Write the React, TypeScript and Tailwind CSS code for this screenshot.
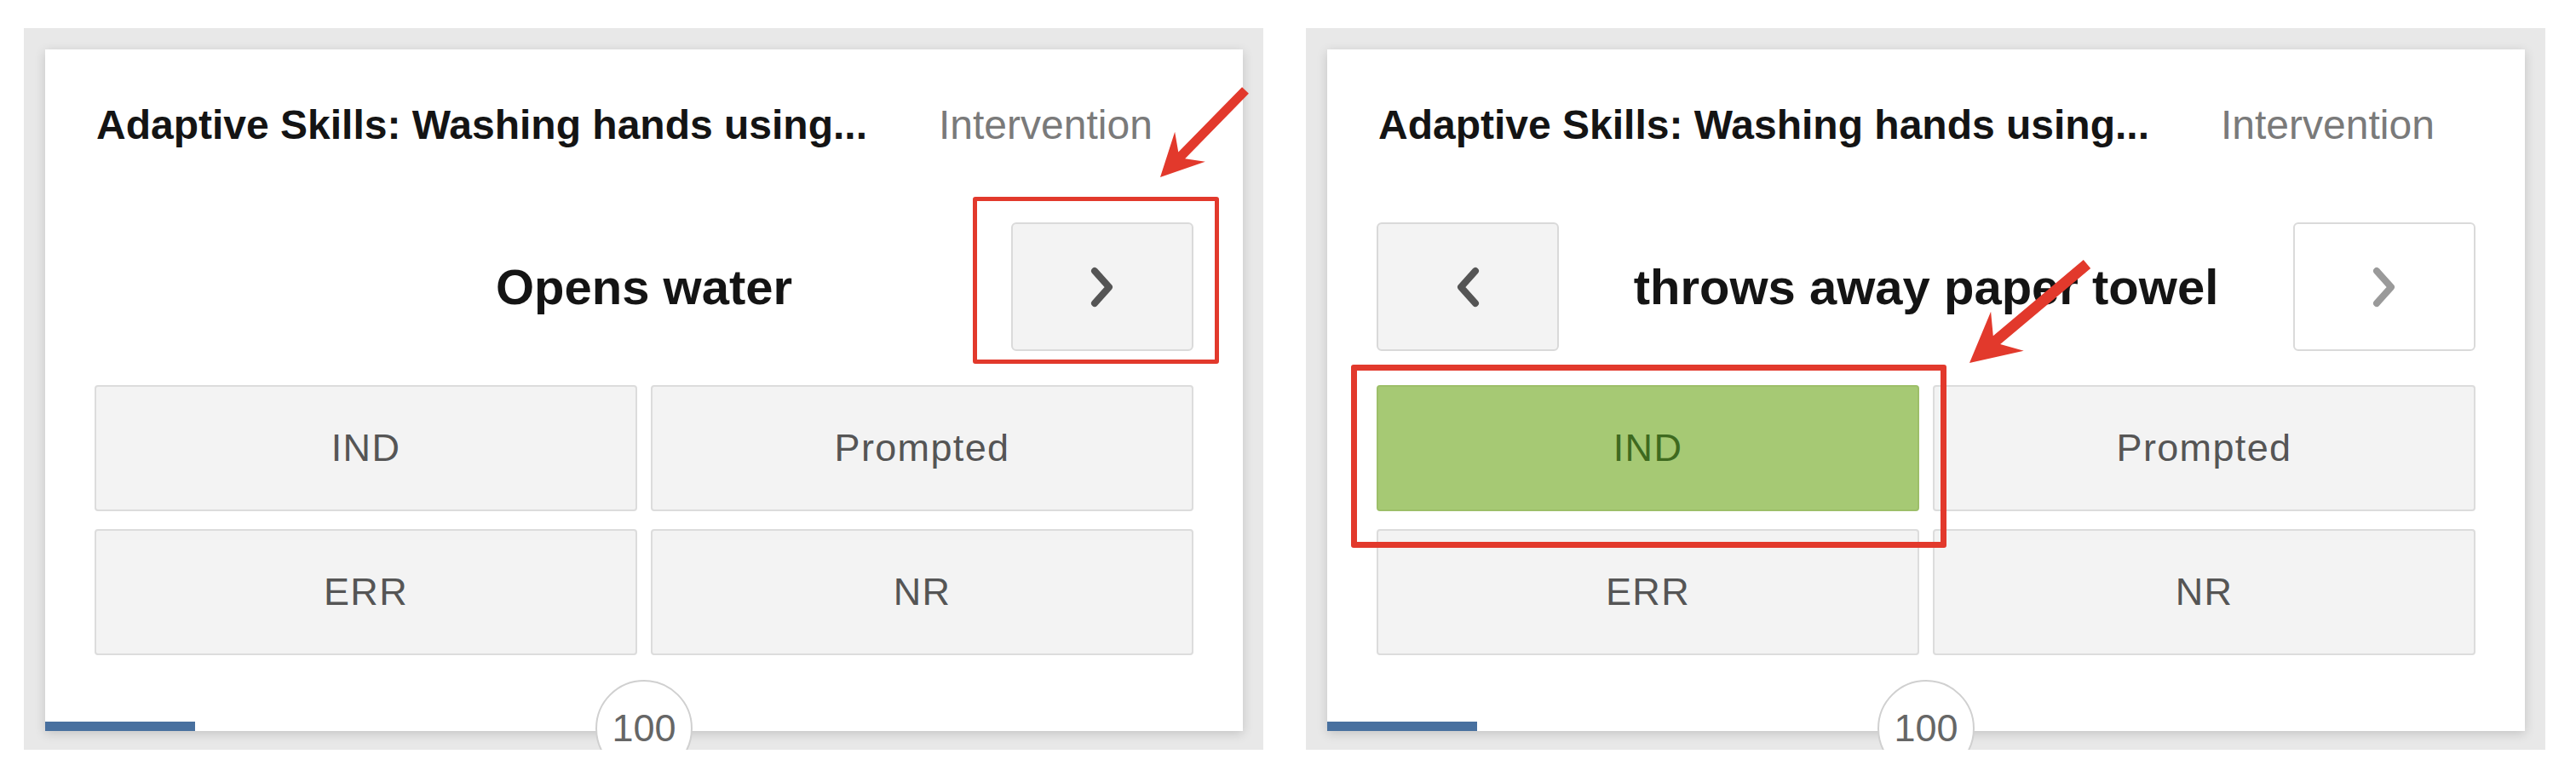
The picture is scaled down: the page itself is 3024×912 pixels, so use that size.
import { FC } from 'react'

type TStepCard = {
    'step': string,
    'has-prev': boolean,
    'next-white': boolean,
    'selected': string | null,
};

type TArrow = {
    x1: number, y1: number, x2: number, y2: number,
    shaft: number, headLen: number, headW: number,
};

const cards: TStepCard[] = [
    { 'step': 'Opens water', 'has-prev': false, 'next-white': false, 'selected': null },
    { 'step': 'throws away paper towel', 'has-prev': true, 'next-white': true, 'selected': 'IND' },
];

const options: string[] = ['IND', 'Prompted', 'ERR', 'NR'];

const arrows: TArrow[] = [
    { x1: 1462, y1: 106, x2: 1362, y2: 208, shaft: 11, headLen: 50, headW: 50 },
    { x1: 2450, y1: 310, x2: 2312, y2: 426, shaft: 13, headLen: 58, headW: 60 },
];

// polygon for an annotation arrow (shaft + barbed head)
const arrowPoints = (a: TArrow) => {
    const dx = a.x2 - a.x1, dy = a.y2 - a.y1;
    const len = Math.hypot(dx, dy);
    const ux = dx / len, uy = dy / len;
    const nx = -uy, ny = ux;
    const bx = a.x2 - ux * a.headLen, by = a.y2 - uy * a.headLen;
    const kx = a.x2 - ux * a.headLen * 0.72, ky = a.y2 - uy * a.headLen * 0.72;
    const h = a.shaft / 2, w = a.headW / 2;
    const pts = [
        [a.x1 + nx * h, a.y1 + ny * h],
        [kx + nx * h, ky + ny * h],
        [bx + nx * w, by + ny * w],
        [a.x2, a.y2],
        [bx - nx * w, by - ny * w],
        [kx - nx * h, ky - ny * h],
        [a.x1 - nx * h, a.y1 - ny * h],
    ];
    return pts.map(p => p.join(',')).join(' ');
};

const Chevron: FC<{ dir: 'left' | 'right', color: string }> = ({ dir, color }) => (
    <svg width="32" height="48" viewBox="0 0 32 48" fill="none">
        <polyline
            points={dir === 'left' ? '25,5 8,24 25,43' : '7,5 24,24 7,43'}
            stroke={color}
            strokeWidth="8"
            strokeLinecap="round"
            strokeLinejoin="round"
        />
    </svg>
);

const StepCard: FC<{ card: TStepCard }> = ({ card }) => {
    return (
        <div className="overflow-hidden bg-[#e8e8e8] pt-[25px] pl-[25px] pr-[24px] pb-[22px]">
            <div className="relative flex h-[800px] w-[1406px] flex-col bg-white shadow-[0_3px_12px_rgba(0,0,0,0.16)]">
                {/* header */}
                <div className="flex items-baseline whitespace-nowrap pl-[60px] pt-[61px] text-[48px] leading-[56px]">
                    <span className="w-[989px] font-bold text-[#141414]">Adaptive Skills: Washing hands using...</span>
                    <span className="text-[#7a7a7a]">Intervention</span>
                </div>

                {/* step nav */}
                <div className="mt-[86px] grid grid-cols-[214px_1fr_214px] items-center px-[58px]">
                    {card['has-prev'] ? (
                        <button className="flex h-[151px] items-center justify-center rounded-[6px] border-2 border-[#d9d9d9] bg-[#f3f3f3]">
                            <Chevron dir="left" color="#555555" />
                        </button>
                    ) : <div />}
                    <h2 className="pt-[1px] text-center text-[58px] font-bold leading-none text-[#141414]">{card.step}</h2>
                    <button className={`flex h-[151px] items-center justify-center rounded-[6px] border-2 border-[#dadada] ${card['next-white'] ? 'bg-white' : 'bg-[#f3f3f3]'}`}>
                        <Chevron dir="right" color={card['next-white'] ? '#9a9a9a' : '#555555'} />
                    </button>
                </div>

                {/* scoring buttons */}
                <div className="mt-[40px] grid grid-cols-2 gap-x-[16px] gap-y-[21px] px-[58px]">
                    {options.map((opt: string) => (
                        <button
                            key={opt}
                            className={
                                card.selected === opt
                                    ? 'flex h-[148px] items-center justify-center rounded-[4px] border-2 border-[#9dbf69] bg-[#a6c974] text-[45px] tracking-[0.03em] text-[#3e6a1f]'
                                    : 'flex h-[148px] items-center justify-center rounded-[4px] border-2 border-[#dcdcdc] bg-[#f3f3f3] text-[45px] tracking-[0.03em] text-[#555555]'
                            }
                        >
                            {opt}
                        </button>
                    ))}
                </div>

                {/* progress */}
                <div className="mt-auto h-[11px] w-[176px] bg-[#48709f]" />
                <div className="absolute left-1/2 top-[740px] flex h-[114px] w-[114px] -translate-x-1/2 items-center justify-center rounded-full border-2 border-[#d0d0d0] bg-white text-[45px] text-[#666666]">
                    100
                </div>
            </div>
        </div>
    );
};

const App: FC = () => {
    return (
        <div className="relative h-[912px] w-[3024px] overflow-hidden bg-white font-['Liberation_Sans',Arial,sans-serif]">
            <div className="flex gap-[50px] pl-[28px] pt-[33px]">
                {cards.map((card: TStepCard, index: number) => (
                    <StepCard key={index} card={card} />
                ))}
            </div>

            {/* annotations */}
            <div className="pointer-events-none absolute left-[1142px] top-[231px] h-[196px] w-[289px] rounded-[3px] border-[5px] border-[#e2392c]" />
            <div className="pointer-events-none absolute left-[1586px] top-[428px] h-[215px] w-[699px] rounded-[3px] border-[7px] border-[#e2392c]" />
            <svg className="pointer-events-none absolute left-0 top-0" width="3024" height="912">
                {arrows.map((a: TArrow, index: number) => (
                    <polygon key={index} points={arrowPoints(a)} fill="#e2392c" />
                ))}
            </svg>
        </div>
    )
}

export default App
